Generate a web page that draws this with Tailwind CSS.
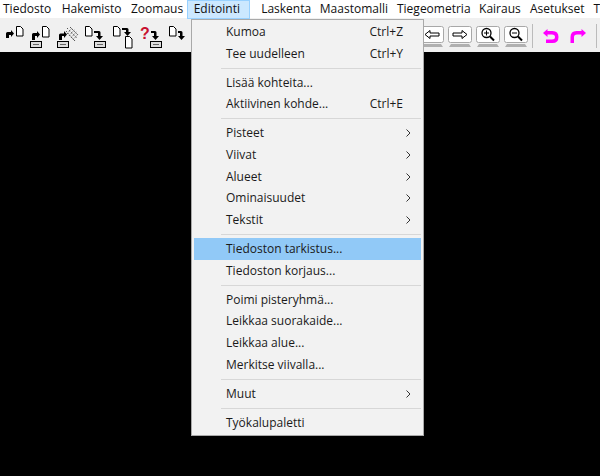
<!DOCTYPE html>
<html lang="fi">
<head>
<meta charset="utf-8">
<script src="https://cdn.jsdelivr.net/npm/@tailwindcss/browser@4"></script>
</head>
<body class="bg-black">
<div class="relative w-[600px] h-[476px] overflow-hidden bg-black font-['Open_Sans','Noto_Sans',sans-serif] text-[12px] text-[#111]">
  <nav class="flex h-[18px] bg-white items-center whitespace-nowrap">
    <span class="w-[63px] pl-[3px]">Tiedosto</span>
    <span class="w-[71px]">Hakemisto</span>
    <span class="w-[57px]">Zoomaus</span>
    <span class="w-[65px] h-[19px] -ml-[0px] pl-[6px] w-[54px] bg-[#cce8ff] border border-[#99d1ff] leading-[16px]">Editointi</span>
    <span class="w-[11px]"></span>
    <span class="w-[60px]">Laskenta</span>
    <span class="w-[79px]">Maastomalli</span>
    <span class="w-[84px]">Tiegeometria</span>
    <span class="w-[52px]">Kairaus</span>
    <span class="w-[65px]">Asetukset</span>
    <span>T</span>
  </nav>
  <div class="flex items-start h-[34px] bg-[#f0f0f0]">
    <div class="flex w-[191px] pl-[5px] pt-[7px] gap-[4px]">
      <svg class="w-[19px] h-[18px]" viewBox="0 0 19 18"><path d="M1 13V8.5q0-1.5 1.5-1.5H6V5l3 3.5-3 3.5V10H4v3z" fill="#000"/><path d="M11.5 1.5h4l2.500 2.500v7h-6.500z" fill="#fff" stroke="#000"/></svg>
      <svg class="w-[24px] h-[24px]" viewBox="0 0 24 24"><path d="M4 15V9.500q0-1.500 1.500-1.500H9V6l3 3.500-3 3.500v-2H7v4z" fill="#000"/><path d="M14.500 1.500h4l2.500 2.500v8h-6.500z" fill="#fff" stroke="#000"/><rect x="2.500" y="16.500" width="11" height="6" fill="#ddd" stroke="#000"/><path d="M5 19.500h6" stroke="#666"/></svg>
      <svg class="w-[24px] h-[24px]" viewBox="0 0 24 24"><path d="M3 15V10q0-1.500 1.500-1.500H8V6l3 3.500-3 3.500v-2H6v4z" fill="#000"/><path d="M11 9l5-6M13 11l6-7M15 13l6-7M17 15l5-6M11 3l10 10M14 2l8 8M10 6l9 10" stroke="#555" stroke-dasharray="1.500 1.500" fill="none"/><rect x="1.500" y="16.500" width="11" height="6" fill="#ddd" stroke="#000"/><path d="M4 19.500h6" stroke="#666"/></svg>
      <svg class="w-[24px] h-[24px]" viewBox="0 0 24 24"><path d="M1.500 1.500h4l2.500 2.500v7H1.500z" fill="#fff" stroke="#000"/><path d="M10 6h5q1.500 0 1.500 1.500V11H19l-3.500 4-3.500-4h2V8h-4z" fill="#000"/><rect x="10.500" y="16.500" width="11" height="6" fill="#ddd" stroke="#000"/><path d="M13 19.500h6" stroke="#666"/></svg>
      <svg class="w-[24px] h-[24px] ml-[0px]" viewBox="0 0 24 24"><path d="M1.500 1.500h4l2.500 2.500v7H1.500z" fill="#fff" stroke="#000"/><path d="M10 3h5q1.500 0 1.500 1.500V7H19l-3.500 4-3.500-4h2V5h-4z" fill="#000"/><path d="M13.500 11.500h4l2.500 2.500v9h-6.500z" fill="#fff" stroke="#000"/></svg>
      <svg class="w-[24px] h-[24px]" viewBox="0 0 24 24"><text x="0" y="14" font-size="16" font-weight="700" fill="#c8102e" font-family="Liberation Sans, sans-serif">?</text><path d="M11 6h4q1.500 0 1.500 1.500V11H19l-3.500 4-3.500-4h2V8h-3z" fill="#000"/><rect x="10.500" y="16.500" width="11" height="6" fill="#ddd" stroke="#000"/><path d="M13 19.500h6" stroke="#666"/></svg>
      <svg class="w-[19px] h-[18px]" viewBox="0 0 19 18"><path d="M1.500 1.500h4l2.500 2.500v7H1.500z" fill="#fff" stroke="#000"/><path d="M10 6h3q1.500 0 1.500 1.500V11H17l-3.500 4-3.500-4h2V8h-2z" fill="#000"/></svg>
    </div>
    <div class="flex-1"></div>
    <div class="flex items-start pt-[8px] gap-[4px] pr-[0px] w-[180px] relative">
      <svg class="w-[24px] h-[22px] shrink-0" viewBox="0 0 24 22"><rect x="0.500" y="0.500" width="23" height="16" rx="2" fill="#fff" stroke="#a8a8a8" stroke-width="1"/><path d="M3 18h18l2 3H1z" fill="#b0b0b0"/><path d="M5 8.500l5-4v2.500h9v3h-9v2.500z" fill="#fff" stroke="#000"/></svg>
      <svg class="w-[24px] h-[22px] shrink-0" viewBox="0 0 24 22"><rect x="0.500" y="0.500" width="23" height="16" rx="2" fill="#fff" stroke="#a8a8a8"/><path d="M3 18h18l2 3H1z" fill="#b0b0b0"/><path d="M19 8.500l-5-4v2.500H5v3h9v2.500z" fill="#fff" stroke="#000"/></svg>
      <svg class="w-[24px] h-[22px] shrink-0" viewBox="0 0 24 22"><rect x="0.500" y="0.500" width="23" height="16" rx="2" fill="#fff" stroke="#a8a8a8"/><path d="M3 18h18l2 3H1z" fill="#b0b0b0"/><circle cx="10.500" cy="7" r="4.500" fill="#fff" stroke="#000" stroke-width="1.300"/><path d="M8 7h5M10.500 4.500v5" stroke="#000"/><path d="M14 10.500l4 4" stroke="#000" stroke-width="2"/></svg>
      <svg class="w-[24px] h-[22px] shrink-0" viewBox="0 0 24 22"><rect x="0.500" y="0.500" width="23" height="16" rx="2" fill="#fff" stroke="#a8a8a8"/><path d="M3 18h18l2 3H1z" fill="#b0b0b0"/><circle cx="10.500" cy="7" r="4.500" fill="#fff" stroke="#000" stroke-width="1.300"/><path d="M8 7h5" stroke="#000"/><path d="M14 10.500l4 4" stroke="#000" stroke-width="2"/></svg>
      <div class="w-px h-[24px] bg-[#bbb] shrink-0 -mt-[2px]"></div>
      <svg class="w-[17px] h-[16px] shrink-0 ml-[5px] mt-[2px]" viewBox="0 0 17 16"><path d="M5.500 1L1 5l4.500 4V6.500H10q3 0 3 2.500t-3 2.500H4V15h6.500q6 0 6-6t-6-6H5.500z" fill="#f0f"/></svg>
      <svg class="w-[17px] h-[16px] shrink-0 ml-[7px] mt-[2px]" viewBox="0 0 17 16"><path d="M11.500 1L16 5l-4.500 4V6.500H7Q4 6.500 4 9v6H.5V9q0-6 6-6h5z" fill="#f0f"/></svg>
      <div class="w-px h-[24px] bg-[#bbb] shrink-0 -mt-[2px] ml-[5px]"></div>
    </div>
  </div>
  <div class="absolute left-[191px] top-[19px] w-[233px] h-[417px] bg-[#f2f2f2] border border-[#a9a9a9] py-[1.150px] px-[2px] text-[#1a1a1a]">
    <div class="flex items-center h-[21.7px] pl-[32px] pr-[18px] justify-between"><span>Kumoa</span><span>Ctrl+Z</span></div>
    <div class="flex items-center h-[21.7px] pl-[32px] pr-[18px] justify-between"><span>Tee uudelleen</span><span>Ctrl+Y</span></div>
    <div class="h-[7.300px] flex items-center pl-[27px]"><div class="h-px w-full bg-[#d7d7d7]"></div></div>
    <div class="flex items-center h-[21.7px] pl-[32px] pr-[18px] justify-between"><span>Lisää kohteita...</span></div>
    <div class="flex items-center h-[21.7px] pl-[32px] pr-[18px] justify-between"><span>Aktiivinen kohde...</span><span>Ctrl+E</span></div>
    <div class="h-[7.300px] flex items-center pl-[27px]"><div class="h-px w-full bg-[#d7d7d7]"></div></div>
    <div class="flex items-center h-[21.7px] pl-[32px] pr-[10px] justify-between"><span>Pisteet</span><svg class="w-[5px] h-[8px]" viewBox="0 0 5 8"><path d="M.5.500L4 4 .5 7.500" fill="none" stroke="#333"/></svg></div>
    <div class="flex items-center h-[21.7px] pl-[32px] pr-[10px] justify-between"><span>Viivat</span><svg class="w-[5px] h-[8px]" viewBox="0 0 5 8"><path d="M.5.500L4 4 .5 7.500" fill="none" stroke="#333"/></svg></div>
    <div class="flex items-center h-[21.7px] pl-[32px] pr-[10px] justify-between"><span>Alueet</span><svg class="w-[5px] h-[8px]" viewBox="0 0 5 8"><path d="M.5.500L4 4 .5 7.500" fill="none" stroke="#333"/></svg></div>
    <div class="flex items-center h-[21.7px] pl-[32px] pr-[10px] justify-between"><span>Ominaisuudet</span><svg class="w-[5px] h-[8px]" viewBox="0 0 5 8"><path d="M.5.500L4 4 .5 7.500" fill="none" stroke="#333"/></svg></div>
    <div class="flex items-center h-[21.7px] pl-[32px] pr-[10px] justify-between"><span>Tekstit</span><svg class="w-[5px] h-[8px]" viewBox="0 0 5 8"><path d="M.5.500L4 4 .5 7.500" fill="none" stroke="#333"/></svg></div>
    <div class="h-[7.300px] flex items-center pl-[27px]"><div class="h-px w-full bg-[#d7d7d7]"></div></div>
    <div class="flex items-center h-[21.7px] pl-[32px] bg-[#91c9f7]"><span>Tiedoston tarkistus...</span></div>
    <div class="flex items-center h-[21.7px] pl-[32px]"><span>Tiedoston korjaus...</span></div>
    <div class="h-[7.300px] flex items-center pl-[27px]"><div class="h-px w-full bg-[#d7d7d7]"></div></div>
    <div class="flex items-center h-[21.7px] pl-[32px]"><span>Poimi pisteryhmä...</span></div>
    <div class="flex items-center h-[21.7px] pl-[32px]"><span>Leikkaa suorakaide...</span></div>
    <div class="flex items-center h-[21.7px] pl-[32px]"><span>Leikkaa alue...</span></div>
    <div class="flex items-center h-[21.7px] pl-[32px]"><span>Merkitse viivalla...</span></div>
    <div class="h-[7.300px] flex items-center pl-[27px]"><div class="h-px w-full bg-[#d7d7d7]"></div></div>
    <div class="flex items-center h-[21.7px] pl-[32px] pr-[10px] justify-between"><span>Muut</span><svg class="w-[5px] h-[8px]" viewBox="0 0 5 8"><path d="M.5.500L4 4 .5 7.500" fill="none" stroke="#333"/></svg></div>
    <div class="h-[7.300px] flex items-center pl-[27px]"><div class="h-px w-full bg-[#d7d7d7]"></div></div>
    <div class="flex items-center h-[21.7px] pl-[32px]"><span>Työkalupaletti</span></div>
  </div>
</div>
</body>
</html>
